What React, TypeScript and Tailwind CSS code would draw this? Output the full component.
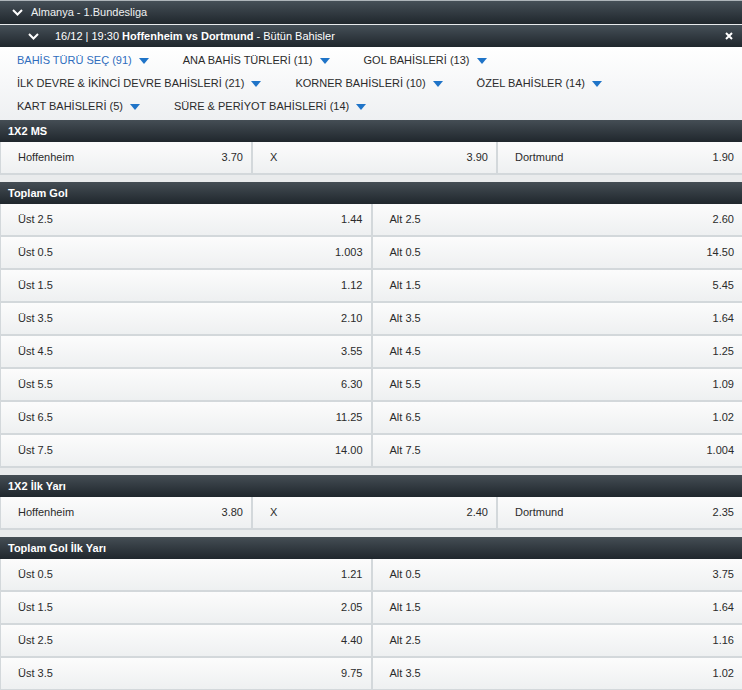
import React from "react"

const filters = [
  { label: "BAHİS TÜRÜ SEÇ (91)", active: true },
  { label: "ANA BAHİS TÜRLERİ (11)" },
  { label: "GOL BAHİSLERİ (13)" },
  { label: "İLK DEVRE & İKİNCİ DEVRE BAHİSLERİ (21)" },
  { label: "KORNER BAHİSLERİ (10)" },
  { label: "ÖZEL BAHİSLER (14)" },
  { label: "KART BAHİSLERİ (5)" },
  { label: "SÜRE & PERİYOT BAHİSLERİ (14)" },
]

const toplamGol = [
  ["Üst 2.5", "1.44", "Alt 2.5", "2.60"],
  ["Üst 0.5", "1.003", "Alt 0.5", "14.50"],
  ["Üst 1.5", "1.12", "Alt 1.5", "5.45"],
  ["Üst 3.5", "2.10", "Alt 3.5", "1.64"],
  ["Üst 4.5", "3.55", "Alt 4.5", "1.25"],
  ["Üst 5.5", "6.30", "Alt 5.5", "1.09"],
  ["Üst 6.5", "11.25", "Alt 6.5", "1.02"],
  ["Üst 7.5", "14.00", "Alt 7.5", "1.004"],
]

const toplamGolIlkYari = [
  ["Üst 0.5", "1.21", "Alt 0.5", "3.75"],
  ["Üst 1.5", "2.05", "Alt 1.5", "1.64"],
  ["Üst 2.5", "4.40", "Alt 2.5", "1.16"],
  ["Üst 3.5", "9.75", "Alt 3.5", "1.02"],
]

function Chevron() {
  return (
    <svg width="11" height="7" viewBox="0 0 11 7" className="shrink-0">
      <polyline points="1,1 5.5,5.5 10,1" fill="none" stroke="#fff" strokeWidth="2" />
    </svg>
  )
}

function Caret() {
  return (
    <svg width="10" height="6" viewBox="0 0 10 6" className="ml-[7px] shrink-0">
      <polygon points="0,0 10,0 5,6" fill="#1f74c8" />
    </svg>
  )
}

function Cell({ name, odd }: { name: string; odd: string }) {
  return (
    <div className="h-[31px] flex items-center justify-between pl-[17px] pr-[8px] bg-gradient-to-b from-[#fcfcfc] to-[#eef0f1] text-[#2b2b2b]">
      <span>{name}</span>
      <span>{odd}</span>
    </div>
  )
}

function SectionHeader({ title }: { title: string }) {
  return (
    <div className="h-[22px] flex items-center pl-[8px] font-bold text-white bg-gradient-to-b from-[#454e55] to-[#20272d]">
      {title}
    </div>
  )
}

function ThreeWay({ title, odds }: { title: string; odds: string[] }) {
  return (
    <div>
      <SectionHeader title={title} />
      <div className="grid grid-cols-[250px_243px_1fr] gap-[2px] pl-px pb-[2px] bg-[#d3d8db]">
        <Cell name="Hoffenheim" odd={odds[0]} />
        <Cell name="X" odd={odds[1]} />
        <Cell name="Dortmund" odd={odds[2]} />
      </div>
    </div>
  )
}

function OverUnder({ title, rows }: { title: string; rows: string[][] }) {
  return (
    <div>
      <SectionHeader title={title} />
      <div className="grid grid-cols-2 gap-[2px] pl-px pb-[2px] bg-[#d3d8db]">
        {rows.map((r) => (
          <React.Fragment key={r[0]}>
            <Cell name={r[0]} odd={r[1]} />
            <Cell name={r[2]} odd={r[3]} />
          </React.Fragment>
        ))}
      </div>
    </div>
  )
}

export default function App() {
  return (
    <div className="w-[742px] h-[690px] overflow-hidden bg-[#e9ebec] font-['Liberation_Sans',Arial,sans-serif] text-[11px]">
      <div className="h-px bg-[#aeb5ba]" />
      {/* League bar */}
      <div className="h-[23px] flex items-center pl-[12px] gap-[8px] text-[#eef0f1] bg-gradient-to-b from-[#465058] to-[#20272d]">
        <Chevron />
        <span>Almanya - 1.Bundesliga</span>
      </div>
      <div className="h-px bg-[#e8eaec]" />
      {/* Match bar */}
      <div className="h-[22px] flex items-center pl-[28px] pr-[9px] text-white bg-gradient-to-b from-[#465058] to-[#20272d]">
        <Chevron />
        <span className="ml-[16px]">
          16/12 | 19:30 <b>Hoffenheim vs Dortmund</b> - Bütün Bahisler
        </span>
        <svg width="8" height="8" viewBox="0 0 8 8" className="ml-auto">
          <path d="M1 1 L7 7 M7 1 L1 7" stroke="#fff" strokeWidth="2" />
        </svg>
      </div>

      {/* Filter panel */}
      <div className="flex flex-wrap pl-[17px] pt-[2px] pb-[2px] bg-gradient-to-b from-[#ffffff] to-[#eef0f2]">
        {filters.map((f) => (
          <div
            key={f.label}
            className={`h-[23px] flex items-center mr-[34px] ${f.active ? "text-[#2f6dbd]" : "text-[#2b2b2b]"}`}
          >
            <span>{f.label}</span>
            <Caret />
          </div>
        ))}
      </div>

      <div className="flex flex-col gap-[7px]">
        <ThreeWay title="1X2 MS" odds={["3.70", "3.90", "1.90"]} />
        <OverUnder title="Toplam Gol" rows={toplamGol} />
        <ThreeWay title="1X2 İlk Yarı" odds={["3.80", "2.40", "2.35"]} />
        <OverUnder title="Toplam Gol İlk Yarı" rows={toplamGolIlkYari} />
      </div>
    </div>
  )
}
